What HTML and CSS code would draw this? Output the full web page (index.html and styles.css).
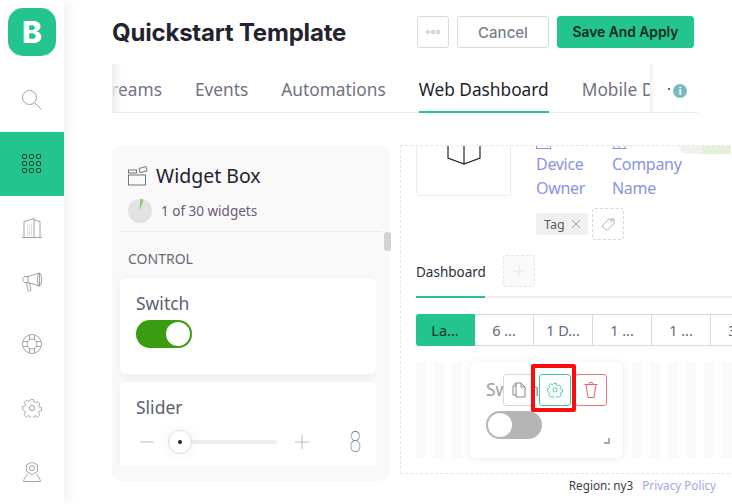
FILE: index.html
```html
<!DOCTYPE html>
<html lang="en">
<head>
<meta charset="utf-8">
<title>Quickstart Template</title>
<link rel="stylesheet" href="styles.css">
</head>
<body>
<div class="app">
  <nav class="sidebar">
    <div class="logo">B</div>
    <a class="nav-item"><svg width="20" height="20" viewBox="0 0 20 20" class="ico"><circle cx="7.500" cy="7.500" r="7"/><path d="M12.500 12.500l7 7"/></svg></a>
    <a class="nav-item active"><svg width="20" height="20" viewBox="0 0 20 20" class="grid-ico"><rect x=".5" y=".5" width="4" height="4" rx="1"/><rect x="7.500" y=".5" width="4" height="4" rx="1"/><rect x="14.500" y=".5" width="4" height="4" rx="1"/><rect x=".5" y="7.500" width="4" height="4" rx="1"/><rect x="7.500" y="7.500" width="4" height="4" rx="1"/><rect x="14.500" y="7.500" width="4" height="4" rx="1"/><rect x=".5" y="14.500" width="4" height="4" rx="1"/><rect x="7.500" y="14.500" width="4" height="4" rx="1"/><rect x="14.500" y="14.500" width="4" height="4" rx="1"/></svg></a>
    <a class="nav-item"><svg width="20" height="20" viewBox="0 0 20 20" class="ico"><path d="M0 19.500h20M2 19.500V3.500L12 .5v19M12 2l6 1.500v16"/><path class="dots" d="M5 7h5M5 9h5M5 11h5M5 13h5M5 15h5M5 17h5"/></svg></a>
    <a class="nav-item shifted"><svg width="20" height="20" viewBox="0 0 20 20" class="ico"><path d="M6 4.500L17.500 1v13L6 10.500zM6 4.500H3C1.500 4.500 1 6 1 7.500S1.500 10.500 3 10.500h3M4.500 10.500l1.500 8c1.200.8 2.300.8 3 0l-1.400-7.300"/><ellipse cx="17.500" cy="7.500" rx="2" ry="6.500"/></svg></a>
    <a class="nav-item raised"><svg width="20" height="20" viewBox="0 0 20 20" class="ico"><circle cx="10" cy="10" r="9.500"/><circle cx="10" cy="10" r="5"/><path d="M7.500 1v4.500M12.500 1v4.500M7.500 14.500V19M12.500 14.500V19M1 7.500h4.500M1 12.500h4.500M14.500 7.500H19M14.500 12.500H19"/></svg></a>
    <a class="nav-item"><svg width="20" height="20" viewBox="0 0 20 20" class="ico"><path d="M8.300.7h3.400l.6 2.600 1.700.8 2.400-1.200 2.300 2.500-1.300 2.300.6 1.300 2.500.6v3.400l-2.500.6-.7 1.700 1.300 2.300-2.400 2.300-2.300-1.300-1.700.7-.6 2.400H8.300l-.6-2.500-1.700-.7-2.300 1.300-2.400-2.400 1.300-2.200-.7-1.700L-.5 11.700V8.300l2.500-.6.700-1.700L1.400 3.700l2.400-2.400L6 2.600l1.700-.7z" transform="translate(1 1) scale(.9)"/><circle cx="10" cy="10" r="2.600"/></svg></a>
    <a class="nav-item"><svg width="20" height="20" viewBox="0 0 20 20" class="ico"><path d="M10 0l5.500 3v6.500L10 12.500 4.500 9.500V3z"/><circle cx="10" cy="6.200" r="2.600"/><path d="M5.500 12C3.500 14.500 2 17 1.500 19.500h17C18 17 16.500 14.500 14.500 12"/></svg></a>
  </nav>

  <main class="main">
    <header class="top-bar">
      <h1 class="title">Quickstart Template</h1>
      <div class="actions">
        <button class="btn btn-more"><svg width="14" height="4" viewBox="0 0 14 4" class="ico"><circle cx="2" cy="2" r="1.500"/><circle cx="7" cy="2" r="1.500"/><circle cx="12" cy="2" r="1.500"/></svg></button>
        <button class="btn btn-cancel">Cancel</button>
        <button class="btn btn-save">Save And Apply</button>
      </div>
    </header>

    <div class="tabs-row">
      <div class="tabs">
        <span class="tab">Datastreams</span>
        <span class="tab">Events</span>
        <span class="tab">Automations</span>
        <span class="tab current">Web Dashboard</span>
        <span class="tab">Mobile Dashboard</span>
      </div>
      <div class="fade-left"></div>
      <div class="tabs-end">
        <span class="tab-dot"></span>
        <span class="info">i</span>
      </div>
    </div>

    <div class="workspace">
      <aside class="widget-box">
        <div class="box-head">
          <div class="box-title">
            <svg width="20" height="20" viewBox="0 0 20 20" class="ico box-ico"><rect x=".5" y="9" width="17" height="10"/><rect x=".5" y="4" width="8" height="3"/><path d="M11 2.500l7-2 1 4.500-7 1.500z"/></svg>
            <span>Widget Box</span>
          </div>
          <div class="box-count">
            <span class="pie"><svg width="24" height="24" viewBox="0 0 24 24"><circle cx="12" cy="12" r="12" fill="#e2e2e2"/><path d="M11.500 12L12.500 0 15.500 .5z" fill="#7cc95a"/></svg></span>
            <span>1 of 30 widgets</span>
          </div>
        </div>
        <div class="thumb"></div>
        <div class="box-list">
          <div class="group-name">CONTROL</div>
          <div class="card">
            <div class="card-name">Switch</div>
            <div class="toggle on"><span class="knob"></span></div>
          </div>
          <div class="card card-slider">
            <div class="card-name">Slider</div>
            <div class="slider">
              <svg width="14" height="14" viewBox="0 0 14 14" class="step"><path d="M0 7h14"/></svg>
              <div class="track"><span class="handle"></span></div>
              <svg width="14" height="14" viewBox="0 0 14 14" class="step"><path d="M0 7h14M7 0v14"/></svg>
              <span class="slider-value">8</span>
            </div>
          </div>
        </div>
      </aside>

      <section class="right-col">
        <div class="canvas">
          <div class="map-bit"></div>
          <div class="canvas-inner">
            <div class="info-row">
              <div class="image-box">
                <svg width="34" height="43" viewBox="0 0 34 43" class="hex"><path d="M1 0v36l16 6 16-6V0M17 0v42"/></svg>
              </div>
              <div class="meta">
                <div class="links">
                  <div class="link-item"><svg width="16" height="16" viewBox="0 0 16 16" class="link-ico"><rect x=".5" y=".5" width="14" height="15"/></svg><span>Device<br>Owner</span></div>
                  <div class="link-item"><svg width="16" height="16" viewBox="0 0 16 16" class="link-ico"><path d="M.5 15.500h14M2 15.500V2h5v13.500M7 5h6v10.500"/></svg><span>Company<br>Name</span></div>
                </div>
                <div class="tag-row">
                  <span class="tag">Tag <svg width="10" height="10" viewBox="0 0 10 10" class="ico"><path d="M1 1l8 8M9 1l-8 8"/></svg></span>
                  <span class="tag-add"><svg width="14" height="14" viewBox="0 0 14 14" class="tag-ico"><path d="M1 9l7-7h5v4.500L6 13.500z"/><circle cx="10.500" cy="3.700" r=".8"/></svg></span>
                </div>
              </div>
            </div>
            <div class="dash-tabs">
              <span class="dash-tab">Dashboard</span>
              <span class="dash-add"><svg width="12" height="12" viewBox="0 0 12 12"><path d="M6 0v12M0 6h12" stroke="#e6e6e6" fill="none"/></svg></span>
            </div>
            <div class="ranges">
              <span class="range selected">La...</span>
              <span class="range">6 ...</span>
              <span class="range">1 D...</span>
              <span class="range">1 ...</span>
              <span class="range">1 ...</span>
              <span class="range">3 ...</span>
            </div>
            <div class="grid-area">
              <div class="widget">
                <div class="widget-name">Switch</div>
                <div class="toggle off"><span class="knob"></span></div>
                <span class="resize"></span>
                <div class="widget-actions">
                  <span class="w-btn"><svg width="16" height="16" viewBox="0 0 16 16" class="copy-ico"><path d="M5 4V1h5l4 4v10H5zM5 4H2v9h3M10 1v4h4M3 2h3"/></svg></span>
                  <span class="w-btn gear"><svg width="16" height="16" viewBox="0 0 20 20" class="gear-ico"><path d="M8.300.7h3.400l.6 2.600 1.700.8 2.400-1.200 2.300 2.500-1.300 2.300.6 1.300 2.500.6v3.400l-2.500.6-.7 1.700 1.300 2.300-2.400 2.300-2.300-1.300-1.700.7-.6 2.400H8.300l-.6-2.500-1.700-.7-2.300 1.300-2.400-2.400 1.300-2.200-.7-1.700L-.5 11.700V8.300l2.500-.6.700-1.700L1.400 3.700l2.400-2.400L6 2.600l1.700-.7z" transform="translate(1 1) scale(.9)"/><circle cx="10" cy="10" r="2.600"/></svg></span>
                  <span class="w-btn danger"><svg width="14" height="16" viewBox="0 0 14 16" class="trash-ico"><path d="M.5 2.500h13M2 2.500l2 13h6l2-13M4.500 2.500L5.500 .5h3l1 2"/></svg></span>
                </div>
              </div>
              <div class="highlight"></div>
            </div>
          </div>
        </div>
        <footer class="footer">
          <span>Region: ny3</span>
          <a class="privacy">Privacy Policy</a>
        </footer>
      </section>
    </div>
  </main>
</div>
</body>
</html>
```

FILE: styles.css
```css
* { box-sizing: border-box; }
html, body { margin: 0; padding: 0; height: 100%; overflow: hidden; background: #fff; }
body { font-family: "Noto Sans", "Open Sans", sans-serif; color: #2c2c3a; }

.app { display: flex; width: 732px; height: 504px; overflow: hidden; }

.ico { fill: none; stroke: #8a8a8a; stroke-width: .8; }
.ico .dots { stroke-dasharray: 1 1; stroke: #aaa; }

.sidebar {
  width: 64px; flex: none; padding-top: 8px; display: flex; flex-direction: column;
  background: #fff; box-shadow: 0 0 14px rgba(0, 0, 0, .09); position: relative; z-index: 2;
}
.logo {
  width: 48px; height: 48px; margin: 0 8px 12px; border-radius: 15px; background: #23c48e; color: #fff;
  font: 800 30px/48px "Inter", sans-serif; text-align: center;
}
.nav-item { height: 64px; flex: none; display: flex; align-items: center; justify-content: center; }
.nav-item.active { background: #23c48e; }
.nav-item.shifted { margin-top: -10px; }
.nav-item.raised { margin-top: -2px; }
.grid-ico { fill: none; stroke: #0d2a22; stroke-width: 1; }

.main { flex: 1; min-width: 0; padding: 16px 0 0 48px; overflow: hidden; }

.top-bar { display: flex; align-items: center; justify-content: space-between; height: 32px; padding-right: 38px; }
.title { margin: 1px 0 0; font: 700 24px/32px "Inter", sans-serif; letter-spacing: -.2px; color: #23232e; white-space: nowrap; }
.actions { display: flex; gap: 8px; }
.btn { height: 32px; border-radius: 3px; border: 1px solid #d9d9d9; background: #fff; font: 500 15px/1 "Inter", sans-serif; padding: 0; display: flex; align-items: center; justify-content: center; }
.btn-more { width: 32px; }
.btn-more .ico { stroke: #aaa; }
.btn-cancel { width: 92px; color: #7a7f8a; }
.btn-save { width: 137px; padding-top: 1px; border-color: #23c48e; background: #23c48e; color: #102a22; font-weight: 600; font-size: 13.800px; }

.tabs-row { position: relative; margin-top: 16px; width: 586px; height: 49px; box-shadow: inset 0 -1px #ececec; overflow: hidden; }
.tabs { display: flex; gap: 33px; margin-left: -53.500px; white-space: nowrap; height: 49px; }
.tab { font-size: 17.300px; line-height: 51px; color: #6f7380; height: 49px; }
.tab.current { color: #1b1f2b; border-bottom: 2px solid #23c48e; }
.fade-left { position: absolute; left: 0; top: 0; bottom: 1px; width: 10px; background: linear-gradient(90deg, #eee, rgba(255, 255, 255, 0)); }
.tabs-end { position: absolute; right: 0; top: 0; bottom: 1px; width: 48px; background: linear-gradient(90deg, #f0f0f0, #fff 5px); }
.tab-dot { position: absolute; left: 18px; top: 24px; width: 2px; height: 2px; background: #666; }
.info { position: absolute; left: 23px; top: 20px; width: 14px; height: 14px; border-radius: 50%; background: #7ab9bd; color: #fff; font: 700 10px/14px "Inter", sans-serif; text-align: center; }

.workspace { display: flex; gap: 10px; margin-top: 32px; align-items: flex-start; }

.widget-box { position: relative; flex: none; width: 278px; height: 336px; background: #f9f9f9; border-radius: 10px; }
.box-head { height: 87px; margin: 0 8px; padding: 21px 8px 0; border-bottom: 1px solid #ececec; }
.box-title { display: flex; align-items: center; gap: 8px; font-size: 19.500px; line-height: 20px; color: #22222e; }
.box-ico { stroke: #555; }
.box-count { display: flex; align-items: center; gap: 9px; margin-top: 13px; font-size: 13.500px; color: #6b5a7a; }
.pie { width: 24px; height: 24px; display: block; }
.pie svg { display: block; }
.thumb { position: absolute; right: -1px; top: 87px; width: 7px; height: 19px; border-radius: 3px; background: #d2d2d2; }
.box-list { height: 233px; margin-right: 14px; padding-left: 8px; overflow: hidden; }
.group-name { height: 46px; padding: 18px 8px 0; font-size: 14px; line-height: 18px; color: #666a75; }
.card { height: 96px; margin-bottom: 8px; padding: 14px 16px 0; border-radius: 6px; background: #fff; box-shadow: 0 2px 10px rgba(0, 0, 0, .06); }
.card-name { font-size: 17.500px; line-height: 22px; color: #5c6070; }
.toggle { position: relative; width: 56px; height: 28px; border-radius: 14px; margin-top: 6px; }
.toggle .knob { position: absolute; top: 2px; width: 24px; height: 24px; border-radius: 50%; background: #fff; }
.toggle.on { background: #3a9c10; }
.toggle.on .knob { right: 2px; }
.toggle.off { background: #b5b5b5; }
.toggle.off .knob { left: 2px; }

.card-slider { height: 100px; }
.slider { display: flex; align-items: center; height: 24px; margin: 12px 0 0 4px; }
.step { flex: none; fill: none; stroke: #bdbdbd; }
.track { position: relative; flex: none; width: 109px; height: 4px; margin: 0 18px 0 14px; border-radius: 2px; background: #eee; }
.handle { position: absolute; left: 0; top: -10px; width: 24px; height: 24px; border-radius: 50%; background: #fff; border: 1px solid #ddd; box-shadow: 0 0 14px rgba(0, 0, 0, .07); }
.handle::after { content: ""; position: absolute; left: 9px; top: 9px; width: 4px; height: 4px; border-radius: 50%; background: #223; }
.slider-value { margin-left: 38px; display: inline-block; transform: scaleX(.7); font: 100 30px/24px "Roboto", sans-serif; color: #3f6f95; }

.right-col { flex: none; width: 332px; }
.canvas { position: relative; width: 360px; height: 329px; border: 1px dashed #e6e6e6; overflow: hidden; }
.canvas-inner { margin-top: -50px; padding-left: 15px; }
.map-bit { position: absolute; right: 28px; top: 0; width: 52px; height: 8px; border-radius: 0 0 0 8px; background: linear-gradient(90deg, #f1f1ee 45%, #e3f1d8 45%); }

.info-row { display: flex; gap: 25px; }
.image-box { width: 95px; height: 100px; border: 1px solid #ececec; border-radius: 4px; display: flex; align-items: flex-end; justify-content: center; padding-bottom: 30px; }
.hex { fill: none; stroke: #1d2333; stroke-width: 1.200; }
.meta { flex: 1; padding-top: 37px; }
.links { display: flex; gap: 26px; }
.link-item { width: 50px; color: #8a94e2; font-size: 16px; letter-spacing: -.3px; line-height: 24px; white-space: nowrap; }
.link-ico { display: block; fill: none; stroke: #8a94e2; margin-bottom: 3px; }
.tag-row { display: flex; align-items: center; gap: 4px; margin-top: 8px; }
.tag { display: flex; align-items: center; gap: 6px; width: 52px; height: 22px; padding-left: 8px; border-radius: 3px; background: #f0f0f0; font-size: 12.500px; color: #555a66; }
.tag-add { width: 32px; height: 32px; display: flex; align-items: center; justify-content: center; border: 1px dashed #d8d8d8; border-radius: 3px; }
.tag-ico { fill: none; stroke: #c9a5a5; }

.dash-tabs { position: relative; display: flex; align-items: center; gap: 18px; height: 42px; margin-top: 16px; border-bottom: 2px solid #eee; }
.dash-tab { height: 42px; margin-bottom: -2px; font-size: 13.500px; line-height: 32px; color: #2c3040; border-bottom: 2px solid #23c48e; width: 69px; }
.dash-add { width: 32px; height: 32px; margin-top: -10px; display: flex; align-items: center; justify-content: center; border: 1px dashed #e6e6e6; border-radius: 3px; background: #fafafa; }

.ranges { display: flex; height: 32px; margin-top: 16px; }
.range { flex: none; width: 59px; height: 32px; border: 1px solid #d9d9d9; border-left-width: 0; font-size: 14.500px; line-height: 30px; text-align: center; color: #667; }
.range.selected { background: #23c48e; border-color: #23c48e; color: #12332a; border-radius: 3px 0 0 3px; }

.grid-area {
  position: relative; height: 96px; margin-top: 16px;
  background: repeating-linear-gradient(90deg, #fafafa 0, #fafafa 10px, #fff 10px, #fff 18px);
}
.widget { position: absolute; left: 54px; top: 0; width: 153px; height: 96px; padding: 15px 16px; background: #fff; border-radius: 6px; box-shadow: 0 1px 8px rgba(0, 0, 0, .08); }
.widget-name { font-size: 17.500px; line-height: 24px; color: #9b9ea8; }
.widget .toggle { margin-top: 10px; }
.resize { position: absolute; right: 13px; bottom: 14px; width: 6px; height: 6px; border-right: 2px solid #aaa; border-bottom: 2px solid #aaa; }
.widget-actions { position: absolute; left: 33px; top: 12px; display: flex; gap: 4px; }
.w-btn { width: 32px; height: 32px; display: flex; align-items: center; justify-content: center; background: #fff; border: 1px solid #d9d9d9; border-radius: 3px; }
.w-btn.gear { border-color: #3fc99b; }
.w-btn.danger { border-color: #f07474; }
.copy-ico { fill: #fff; stroke: #888; }
.gear-ico { fill: none; stroke: #3fc99b; stroke-width: 1.200; }
.trash-ico { fill: none; stroke: #e8606e; }
.highlight { position: absolute; left: 115px; top: 2px; width: 45px; height: 48px; border: 4px solid #fb0d0d; border-radius: 2px; }

.footer { display: flex; justify-content: flex-end; align-items: center; gap: 9px; height: 21px; padding-right: 16px; font-size: 11.700px; color: #3a3d48; }
.privacy { color: #a0a8e4; }
```
